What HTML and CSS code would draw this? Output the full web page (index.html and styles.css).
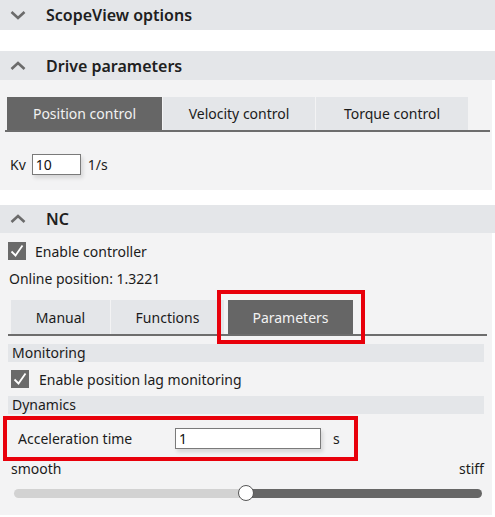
FILE: index.html
```html
<!DOCTYPE html>
<html lang="en">
<head>
    <meta charset="UTF-8">
    <meta name="viewport" content="width=device-width, initial-scale=1.0">
    <title>Axis options</title>
    <link rel="stylesheet" href="styles.css">
</head>
<body>
    <div class="section-header first">
        <svg class="chevron" width="16" height="10" viewBox="0 0 16 10"><path d="M1.5 2 L8 8 L14.5 2" fill="none" stroke="#6b6b6b" stroke-width="2.6"/></svg>
        <span>ScopeView options</span>
    </div>

    <div class="section-header">
        <svg class="chevron" width="16" height="10" viewBox="0 0 16 10"><path d="M1.5 8 L8 2 L14.5 8" fill="none" stroke="#6b6b6b" stroke-width="2.6"/></svg>
        <span>Drive parameters</span>
    </div>
    <div class="panel drive">
        <div class="tabs drive-tabs">
            <div class="tab active">Position control</div>
            <div class="tab">Velocity control</div>
            <div class="tab">Torque control</div>
        </div>
        <div class="kv-row">
            <span>Kv</span>
            <input type="text" class="field kv" value="10">
            <span>1/s</span>
        </div>
    </div>

    <div class="section-header nc-header">
        <svg class="chevron" width="16" height="10" viewBox="0 0 16 10"><path d="M1.5 8 L8 2 L14.5 8" fill="none" stroke="#6b6b6b" stroke-width="2.6"/></svg>
        <span>NC</span>
    </div>
    <div class="panel nc">
        <label class="check-row">
            <span class="checkbox"><svg width="18" height="18" viewBox="0 0 18 18"><path d="M3.5 9.5 L7.5 13.5 L14.5 3.5" fill="none" stroke="#fff" stroke-width="1.8"/></svg></span>
            Enable controller
        </label>
        <div class="online">Online position: 1.3221</div>
        <div class="tabs nc-tabs">
            <div class="tab">Manual</div>
            <div class="tab">Functions</div>
            <div class="tab active marked">Parameters</div>
        </div>
        <div class="group-title">Monitoring</div>
        <label class="check-row lag">
            <span class="checkbox"><svg width="18" height="18" viewBox="0 0 18 18"><path d="M3.5 9.5 L7.5 13.5 L14.5 3.5" fill="none" stroke="#fff" stroke-width="1.8"/></svg></span>
            Enable position lag monitoring
        </label>
        <div class="group-title">Dynamics</div>
        <div class="accel-row">
            <span class="accel-label">Acceleration time</span>
            <input type="text" class="field accel" value="1">
            <span>s</span>
        </div>
        <div class="slider-labels">
            <span>smooth</span>
            <span>stiff</span>
        </div>
        <div class="slider">
            <div class="track-left"></div>
            <div class="track-right"></div>
            <div class="thumb"></div>
        </div>
    </div>
</body>
</html>
```

FILE: styles.css
```css
body {
    margin: 0;
    background: #fff;
    font-family: "Noto Sans", "Open Sans", sans-serif;
    font-size: 14px;
    color: #1b1b1b;
    width: 495px;
}
.section-header {
    display: flex;
    align-items: center;
    height: 29px;
    margin-top: 21px;
    background: #e4e6e9;
    font-size: 16px;
    font-weight: 600;
    color: #202020;
}
.section-header.first {
    margin-top: 0;
    height: 30px;
}
.section-header.nc-header {
    margin-top: 15px;
    height: 28px;
}
.chevron {
    margin: 0 20px 0 10px;
}
.panel {
    background: #f3f3f4;
    width: 492px;
}
.panel.drive {
    height: 110px;
    padding-top: 17px;
    box-sizing: border-box;
}
.tabs {
    display: flex;
    border-bottom: 2px solid #6d6d6d;
}
.tab {
    background: #e4e6e9;
    height: 33px;
    display: flex;
    align-items: center;
    justify-content: center;
    margin-right: 1px;
}
.tab.active {
    background: #666;
    color: #f2f2f2;
}
.drive-tabs {
    margin: 0 2px 0 5px;
    padding-left: 2px;
}
.drive-tabs .tab {
    width: 152px;
}
.drive-tabs .tab.active {
    width: 155px;
}
.kv-row {
    display: flex;
    align-items: center;
    margin: 22px 0 0 10px;
}
.field {
    font-family: inherit;
    font-size: 14px;
    color: #111;
    border: 1px solid #7a7a7a;
    background: #fff;
    padding: 0 3px;
    box-sizing: border-box;
    box-shadow: 2px 3px 4px rgba(0, 0, 0, 0.12);
    outline: none;
}
.field.kv {
    width: 49px;
    height: 21px;
    margin: 0 7px 0 6px;
}
.panel.nc {
    height: 282px;
    padding: 9px 0 0 8px;
    box-sizing: border-box;
}
.check-row {
    display: flex;
    align-items: center;
    height: 18px;
}
.checkbox {
    width: 18px;
    height: 18px;
    background: #6a6a6a;
    margin-right: 9px;
    display: flex;
}
.online {
    margin-top: 9px;
    height: 20px;
    line-height: 20px;
    padding-left: 1px;
}
.nc-tabs {
    margin: 11px 5px 0 0;
    padding-left: 3px;
}
.nc-tabs .tab {
    height: 34px;
}
.nc-tabs .tab:nth-child(1) { width: 99px; }
.nc-tabs .tab:nth-child(2) { width: 113px; margin-right: 4px; }
.nc-tabs .tab:nth-child(3) { width: 125px; }
.tab.marked {
    position: relative;
}
.tab.marked::after {
    content: "";
    position: absolute;
    left: -11px;
    right: -12px;
    top: -10px;
    bottom: -10px;
    border: 4px solid #e8000b;
}
.group-title {
    background: #e4e6e9;
    margin: 8px 8px 0 0;
    height: 18px;
    line-height: 18px;
    padding-left: 4px;
}
.check-row.lag {
    margin: 8px 0 0 3px;
}
.check-row.lag .checkbox {
    margin-right: 10px;
}
.accel-row {
    display: flex;
    align-items: center;
    width: 355px;
    height: 45px;
    margin: 2px 0 0 -5px;
    border: 4px solid #e8000b;
    box-sizing: border-box;
    padding-left: 11px;
}
.accel-label {
    width: 157px;
}
.field.accel {
    width: 146px;
    height: 21px;
    margin-right: 12px;
}
.slider-labels {
    display: flex;
    justify-content: space-between;
    margin: 0 8px 0 3px;
    height: 18px;
    line-height: 16px;
}
.slider {
    position: relative;
    display: flex;
    height: 9px;
    margin: 10px 10px 0 6px;
}
.track-left {
    width: 232px;
    background: #d2d2d2;
    border-radius: 5px 0 0 5px;
}
.track-right {
    flex: 1;
    background: #666;
    border-radius: 0 5px 5px 0;
}
.thumb {
    position: absolute;
    left: 224px;
    top: -4px;
    width: 14px;
    height: 14px;
    border-radius: 50%;
    background: #fff;
    border: 1.5px solid #555;
}
```
